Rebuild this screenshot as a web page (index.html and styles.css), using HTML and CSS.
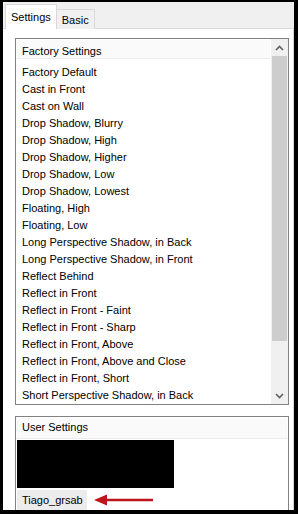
FILE: index.html
```html
<!DOCTYPE html>
<html>
<head>
<meta charset="utf-8">
<link rel="stylesheet" href="styles.css">
</head>
<body>
<div class="frame">
  <div class="tabs">
    <div class="tab active">Settings</div>
    <div class="tab">Basic</div>
    <div class="tabfill"></div>
  </div>
  <div class="panel">
    <div class="listbox factory">
      <div class="listmain">
        <div class="header">Factory Settings</div>
        <ul class="items">
          <li>Factory Default</li>
          <li>Cast in Front</li>
          <li>Cast on Wall</li>
          <li>Drop Shadow, Blurry</li>
          <li>Drop Shadow, High</li>
          <li>Drop Shadow, Higher</li>
          <li>Drop Shadow, Low</li>
          <li>Drop Shadow, Lowest</li>
          <li>Floating, High</li>
          <li>Floating, Low</li>
          <li>Long Perspective Shadow, in Back</li>
          <li>Long Perspective Shadow, in Front</li>
          <li>Reflect Behind</li>
          <li>Reflect in Front</li>
          <li>Reflect in Front - Faint</li>
          <li>Reflect in Front - Sharp</li>
          <li>Reflect in Front, Above</li>
          <li>Reflect in Front, Above and Close</li>
          <li>Reflect in Front, Short</li>
          <li>Short Perspective Shadow, in Back</li>
        </ul>
      </div>
      <div class="scrollbar">
        <div class="arrow up"><svg width="9" height="6" viewBox="0 0 9 6"><path d="M1 5 L4.5 1.5 L8 5" fill="none" stroke="#606060" stroke-width="1.6"/></svg></div>
        <div class="track"><div class="thumb"></div></div>
        <div class="arrow down"><svg width="9" height="6" viewBox="0 0 9 6"><path d="M1 1 L4.5 4.5 L8 1" fill="none" stroke="#606060" stroke-width="1.6"/></svg></div>
      </div>
    </div>
    <div class="listbox user">
      <div class="listmain">
        <div class="header">User Settings</div>
        <div class="blackbox"></div>
        <div class="userrow">
          <span class="useritem">Tiago_grsab</span>
          <svg class="redarrow" width="62" height="14" viewBox="0 0 62 14">
            <line x1="12" y1="7" x2="60" y2="7" stroke="#c0141c" stroke-width="2.5"/>
            <path d="M1 7 L14 1.5 L14 12.5 Z" fill="#c0141c"/>
          </svg>
        </div>
      </div>
    </div>
  </div>
</div>
</body>
</html>
```

FILE: styles.css
```css
* { box-sizing: border-box; }
html, body { margin: 0; padding: 0; background: #000; }
body {
  width: 298px;
  height: 514px;
  font-family: "Liberation Sans", Arial, sans-serif;
  font-size: 11px;
  color: #000;
}
.frame {
  position: relative;
  margin: 2px 4px 0 3px;
  width: 291px;
  height: 508px;
  background: #f0f0f0;
  display: flex;
  flex-direction: column;
}
.tabs {
  display: flex;
  align-items: flex-end;
  height: 27px;
  padding-left: 2px;
  border-bottom: 1px solid #d9d9d9;
}
.tab {
  height: 20px;
  padding: 4px 5px 0 5px;
  border: 1px solid #d9d9d9;
  border-bottom: none;
  background: #f0f0f0;
  font-size: 11px;
  margin-bottom: -1px;
}
.tab.active {
  height: 25px;
  padding: 6px 5px 0 5px;
  background: #fff;
  border-color: #d9d9d9;
  position: relative;
  z-index: 1;
}
.tab + .tab { border-left: none; }
.tabfill { flex: 1; }
.panel {
  flex: 1;
  background: #fff;
  padding: 9px 4px 0 12px;
  display: flex;
  flex-direction: column;
  gap: 11px;
  border-right: 1px solid #d9d9d9;
}
.listbox {
  border: 1px solid #828282;
  display: flex;
  background: #fff;
}
.factory { height: 367px; }
.user { flex: 1; border-bottom: none; }
.listmain { flex: 1; display: flex; flex-direction: column; }
.header {
  height: 22px;
  padding: 5px 0 0 5px;
  font-size: 11px;
  background: #fafafa;
  border-bottom: 1px solid #ececec;
  margin: 1px;
}
.items {
  list-style: none;
  margin: 0;
  padding: 4px 0 0 6px;
}
.items li {
  height: 17px;
  line-height: 17px;
  font-size: 11px;
  white-space: nowrap;
}
.scrollbar {
  width: 17px;
  display: flex;
  flex-direction: column;
  background: #f0f0f0;
}
.arrow {
  height: 17px;
  display: flex;
  align-items: center;
  justify-content: center;
}
.track { flex: 1; padding: 0 1px; }
.thumb {
  height: 285px;
  background: #cdcdcd;
}
.user .header { height: 21px; padding-top: 3px; }
.blackbox {
  margin: 0 0 0 1px;
  width: 157px;
  height: 48px;
  background: #000;
}
.userrow {
  display: flex;
  align-items: center;
  margin-top: 2px;
  padding-left: 1px;
}
.useritem {
  background: #ececec;
  padding: 0 4px 0 5px;
  height: 20px;
  line-height: 20px;
  font-size: 11px;
}
.redarrow { margin-left: 6px; }
```
